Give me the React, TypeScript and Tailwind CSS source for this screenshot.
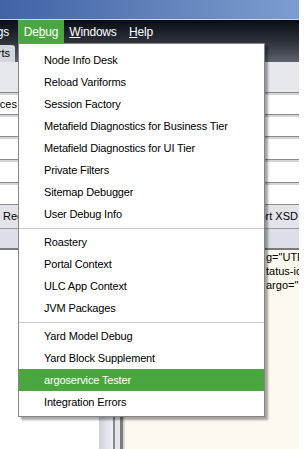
import React from 'react';

const font = { fontFamily: '"Liberation Sans", Arial, sans-serif' };

const groups: string[][] = [
    [
        'Node Info Desk',
        'Reload Variforms',
        'Session Factory',
        'Metafield Diagnostics for Business Tier',
        'Metafield Diagnostics for UI Tier',
        'Private Filters',
        'Sitemap Debugger',
        'User Debug Info',
    ],
    ['Roastery', 'Portal Context', 'ULC App Context', 'JVM Packages'],
    ['Yard Model Debug', 'Yard Block Supplement', 'argoservice Tester', 'Integration Errors'],
];

const active = 'argoservice Tester';

// one text-field row of the form behind the menu
const FieldRow = ({ h, label }: { h: string; label?: string }) => (
    <div className={`${h} flex flex-col border-t border-[#8c8c8c] bg-white`}>
        <div className="h-[2px] bg-[#d3d4d8]" />
        <div className="flex-1 flex items-center">
            {label && (
                <div className="w-[17px] overflow-hidden flex justify-end">
                    <span className="whitespace-nowrap text-[11px] text-black">{label}</span>
                </div>
            )}
        </div>
    </div>
);

const DebugMenu = () => (
    <div className="absolute left-[18px] top-[43px] w-[247px] bg-white border border-[#868686] pt-[5px] pb-[3px] shadow-[3px_3px_2px_rgba(0,0,0,0.35)]">
        {groups.map((items, gi) => (
            <div key={gi}>
                {gi > 0 && (
                    <div className="h-[6px] flex items-center">
                        <div className="h-px w-full bg-[#c9c9c9]" />
                    </div>
                )}
                {items.map((label) => (
                    <div
                        key={label}
                        className={
                            label === active
                                ? 'h-[22px] flex items-center pl-[25px] text-[11px] tracking-[-0.15px] bg-[#4aa73f] text-white'
                                : 'h-[22px] flex items-center pl-[25px] text-[11px] tracking-[-0.15px] text-black'
                        }
                    >
                        {label}
                    </div>
                ))}
            </div>
        ))}
    </div>
);

export default function App() {
    return (
        <div className="relative w-[307px] h-[449px] overflow-hidden bg-white flex" style={font}>
            <div className="w-[299px] flex flex-col">
                {/* title bar */}
                <div className="h-[20px] bg-linear-to-r from-[#4263a5] to-[#7d9dcf] border-b border-[#c9d5ec]" />

                {/* menu bar + tab strip share one dark gradient */}
                <div className="h-[42px] bg-linear-to-b from-[#0a0d15] via-[#2c3039] to-[#5e626c] flex flex-col">
                    <div className="h-[23px] flex items-stretch text-[12px] tracking-[-0.2px] text-white">
                        <div className="w-[18px] overflow-hidden flex justify-end items-center pr-[9px]">
                            <span className="whitespace-nowrap">Settings</span>
                        </div>
                        <div className="w-[46px] flex items-center justify-center bg-[#4aa73f]">
                            <span>
                                De<span className="underline">b</span>ug
                            </span>
                        </div>
                        <div className="w-[58px] flex items-center justify-center">
                            <span>
                                <span className="underline">W</span>indows
                            </span>
                        </div>
                        <div className="px-[7px] flex items-center">
                            <span>
                                <span className="underline">H</span>elp
                            </span>
                        </div>
                    </div>
                    <div className="flex-1 flex items-end">
                        <div className="w-[15px] h-[17px] overflow-hidden flex justify-end items-center pr-[5px] bg-[#d4d6dd] rounded-tr-[3px]">
                            <span className="whitespace-nowrap text-[11px] text-black">Reports</span>
                        </div>
                    </div>
                </div>

                {/* form */}
                <div className="h-[30px] bg-[#e7e8ee]" />
                <FieldRow h="h-[22px]" label="Services" />
                <FieldRow h="h-[22px]" />
                <FieldRow h="h-[23px]" />
                <FieldRow h="h-[23px]" />
                <FieldRow h="h-[22px]" />
                <div className="h-[25px] flex items-center justify-between border-t border-[#8c8c8c] bg-[#e3e4ea] border-b border-b-[#9a9a9a] text-[11px] text-black">
                    <span className="pl-[3px] whitespace-nowrap">Record</span>
                    <span className="pr-[1px] whitespace-nowrap">Import XSD</span>
                </div>
                <div className="h-[21px] bg-[#dcdfe7] border-b-2 border-[#7a7a7a]" />

                {/* lower split: tree, splitter, xml editor */}
                <div className="flex-1 flex">
                    <div className="w-[99px] bg-white" />
                    <div className="w-[26px] flex">
                        <div className="w-[14px] bg-linear-to-r from-[#cfd2db] to-[#eef0f4]" />
                        <div className="w-[2px] bg-[#8a8a8a]" />
                        <div className="w-[5px] bg-[#e6e7eb]" />
                        <div className="w-[3px] bg-[#7a7a7a]" />
                        <div className="w-[2px] bg-[#d6d6d6]" />
                    </div>
                    <div className="flex-1 bg-[#fdf9ee] overflow-hidden pl-[141px] text-[11px] leading-[14px] text-black">
                        <div className="whitespace-nowrap">g="UTF-8"?&gt;</div>
                        <div className="whitespace-nowrap">tatus-id</div>
                        <div className="whitespace-nowrap">argo="</div>
                    </div>
                </div>
            </div>
            <div className="flex-1 bg-white" />

            <DebugMenu />
        </div>
    );
}
